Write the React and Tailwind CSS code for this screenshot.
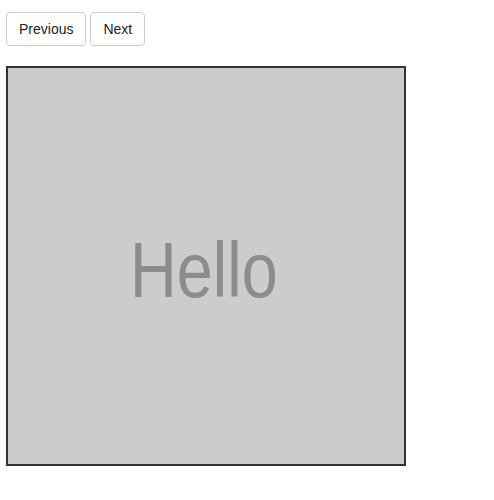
import React from 'react';

export default function App() {
    return (
        <div className="pt-3 pl-1.5 font-['Liberation_Sans',Arial,sans-serif]">
            {/* Controls */}
            <div className="flex gap-1">
                <button className="h-[34px] px-3 text-sm text-[#222] bg-white border border-[#ccc] rounded">
                    Previous
                </button>
                <button className="h-[34px] px-3 text-sm text-[#222] bg-white border border-[#ccc] rounded">
                    Next
                </button>
            </div>

            {/* Canvas */}
            <div className="mt-5 w-[400px] h-[400px] border-2 border-[#333] bg-[#cccccc] flex items-center justify-center">
                <span className="text-[78px] leading-none text-[#8c8c8c] mt-2 -ml-1 scale-x-[0.83] inline-block">Hello</span>
            </div>
        </div>
    );
}
